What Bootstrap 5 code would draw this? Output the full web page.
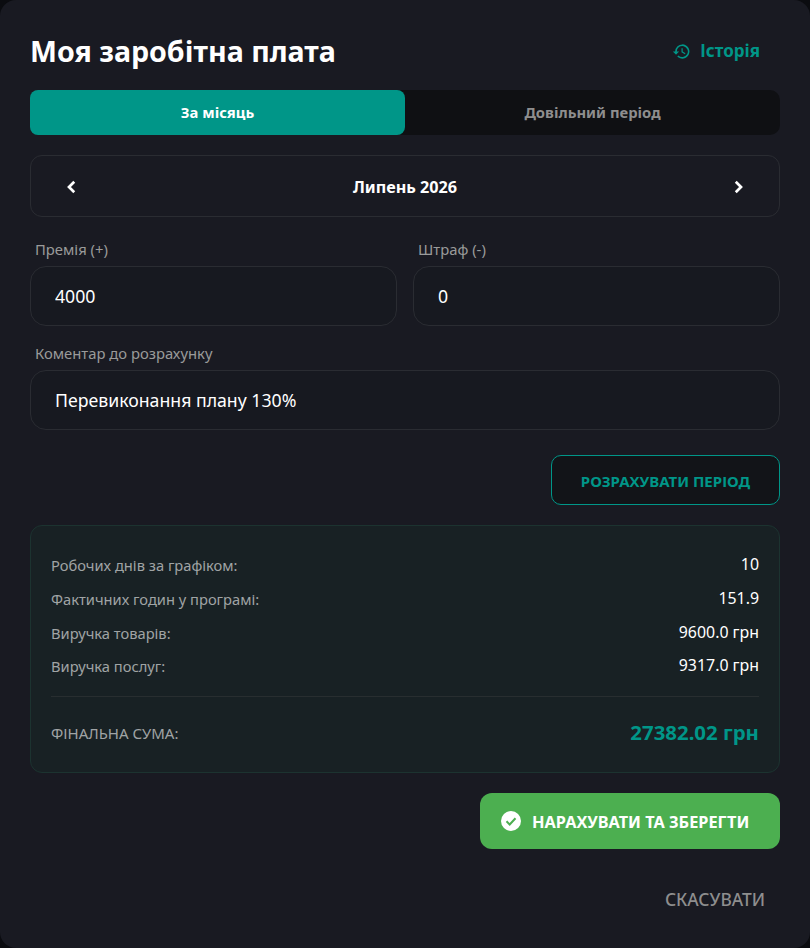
<!DOCTYPE html>
<html lang="uk">
<head>
<meta charset="utf-8">
<title>Моя заробітна плата</title>
<link rel="stylesheet" href="https://cdn.jsdelivr.net/npm/bootstrap@5.3.0/dist/css/bootstrap.min.css">
<style>
html, body { height: 100%; }
body { background: #0b0c10; font-family: "Noto Sans", "Open Sans", sans-serif; color: #fff; overflow: hidden; }
.sal-dialog { background: #191a22; height: 948px; border-radius: 16px; padding: 28px 30px 30px; }
.sal-title { font-size: 28.6px; font-weight: 700; line-height: 46px; margin: 0; }
.sal-history { color: #009688; font-size: 17px; font-weight: 700; padding: 0 20px 0 0; height: 46px; border: 0; background: none; gap: 9px; }
.sal-tabs { background: #0f1013; border-radius: 10px; height: 45px; margin-top: 16px; }
.sal-tab { flex: 1 1 0; border: 0; background: transparent; color: #8e8e8e; font-size: 14.8px; font-weight: 700; border-radius: 8px; }
.sal-tab-on { background: #009688; color: #fff; }
.sal-month { height: 62px; margin-top: 20px; border: 1px solid #2a2c32; border-radius: 12px; padding: 2px 32px 0; font-size: 16.2px; font-weight: 700; }
.sal-label { color: #9a9a9a; font-size: 14.8px; line-height: 20px; padding-left: 5px; margin-bottom: 7px; display: block; }
.sal-input { display: block; width: 100%; height: 60px; background: #171920; border: 1.5px solid #2a2c32; border-radius: 16px; color: #fff; font-size: 17.7px; padding: 0 24px; outline: 0; }
.sal-field-row { margin-top: 22px; gap: 16px; }
.sal-field-comment { margin-top: 17px; }
.sal-calc { display: block; margin: 25px 0 0 auto; width: 229px; height: 50px; background: #121418; border: 1px solid #009688; border-radius: 10px; color: #009688; font-size: 15px; font-weight: 700; padding: 2px 0 0; }
.sal-result { margin-top: 20px; height: 248px; background: #182124; border: 1px solid #1c3330; border-radius: 12px; padding: 22.5px 20px 0; }
.sal-line { height: 33.7px; font-size: 14.7px; color: #a0a4a5; }
.sal-line b { font-size: 15.9px; font-weight: 400; color: #fff; }
.sal-sep { border-top: 1px solid #282e30; margin: 12.5px 0 0; opacity: 1; }
.sal-total { height: 72px; font-size: 15px; color: #a0a4a5; }
.sal-total b { color: #009688; font-size: 20.4px; font-weight: 700; }
.sal-save { display: flex; align-items: center; margin: 20px 0 0 auto; width: 300px; height: 56px; background: #4caf50; border: 0; border-radius: 12px; color: #fff; font-size: 16.3px; font-weight: 700; padding: 0 21px; gap: 11px; white-space: nowrap; }
.sal-save span { padding-top: 2px; }
.sal-cancel { display: block; margin: 23px 15px 0 auto; background: none; border: 0; padding: 0; color: #8e8e8e; font-size: 17.4px; line-height: 54px; font-weight: 500; }
.sal-arrow { border: 0; background: none; padding: 0; line-height: 0; }
</style>
</head>
<body>
<div class="sal-dialog">
  <div class="d-flex justify-content-between align-items-center">
    <h1 class="sal-title">Моя заробітна плата</h1>
    <button class="sal-history d-flex align-items-center" type="button">
      <svg width="19" height="19" viewBox="0 0 24 24" fill="#009688"><path d="M13 3a9 9 0 0 0-9 9H1l3.9 3.9.1.1L9 12H6a7 7 0 1 1 2.05 4.95L6.64 18.36A9 9 0 1 0 13 3zm-1 5v5l4.25 2.52.77-1.28-3.52-2.09V8z"/></svg>
      <span>Історія</span>
    </button>
  </div>
  <div class="sal-tabs d-flex">
    <button class="sal-tab sal-tab-on" type="button">За місяць</button>
    <button class="sal-tab" type="button">Довільний період</button>
  </div>
  <div class="sal-month d-flex justify-content-between align-items-center">
    <button class="sal-arrow" type="button"><svg width="18" height="18" viewBox="0 0 24 24" fill="none" stroke="#fff" stroke-width="3.6"><path d="M15 5l-7 7 7 7"/></svg></button>
    <span>Липень 2026</span>
    <button class="sal-arrow" type="button"><svg width="18" height="18" viewBox="0 0 24 24" fill="none" stroke="#fff" stroke-width="3.6"><path d="M9 5l7 7-7 7"/></svg></button>
  </div>
  <div class="d-flex sal-field-row">
    <div class="flex-fill w-50">
      <label class="sal-label">Премія (+)</label>
      <input class="sal-input" value="4000">
    </div>
    <div class="flex-fill w-50">
      <label class="sal-label">Штраф (-)</label>
      <input class="sal-input" value="0">
    </div>
  </div>
  <div class="sal-field-comment">
    <label class="sal-label">Коментар до розрахунку</label>
    <input class="sal-input" value="Перевиконання плану 130%">
  </div>
  <button class="sal-calc" type="button">РОЗРАХУВАТИ ПЕРІОД</button>
  <div class="sal-result">
    <div class="sal-line d-flex justify-content-between align-items-center"><span>Робочих днів за графіком:</span><b>10</b></div>
    <div class="sal-line d-flex justify-content-between align-items-center"><span>Фактичних годин у програмі:</span><b>151.9</b></div>
    <div class="sal-line d-flex justify-content-between align-items-center"><span>Виручка товарів:</span><b>9600.0 грн</b></div>
    <div class="sal-line d-flex justify-content-between align-items-center"><span>Виручка послуг:</span><b>9317.0 грн</b></div>
    <hr class="sal-sep">
    <div class="sal-total d-flex justify-content-between align-items-center"><span>ФІНАЛЬНА СУМА:</span><b>27382.02 грн</b></div>
  </div>
  <button class="sal-save" type="button">
    <svg width="20" height="20" viewBox="0 0 20 20"><circle cx="10" cy="10" r="10" fill="#fff"/><path d="M5.5 10.3l3.2 3.2 5.8-6.2" fill="none" stroke="#4caf50" stroke-width="2"/></svg>
    <span>НАРАХУВАТИ ТА ЗБЕРЕГТИ</span>
  </button>
  <button class="sal-cancel" type="button">СКАСУВАТИ</button>
</div>
<script src="https://cdn.jsdelivr.net/npm/bootstrap@5.3.0/dist/js/bootstrap.bundle.min.js"></script>
</body>
</html>
